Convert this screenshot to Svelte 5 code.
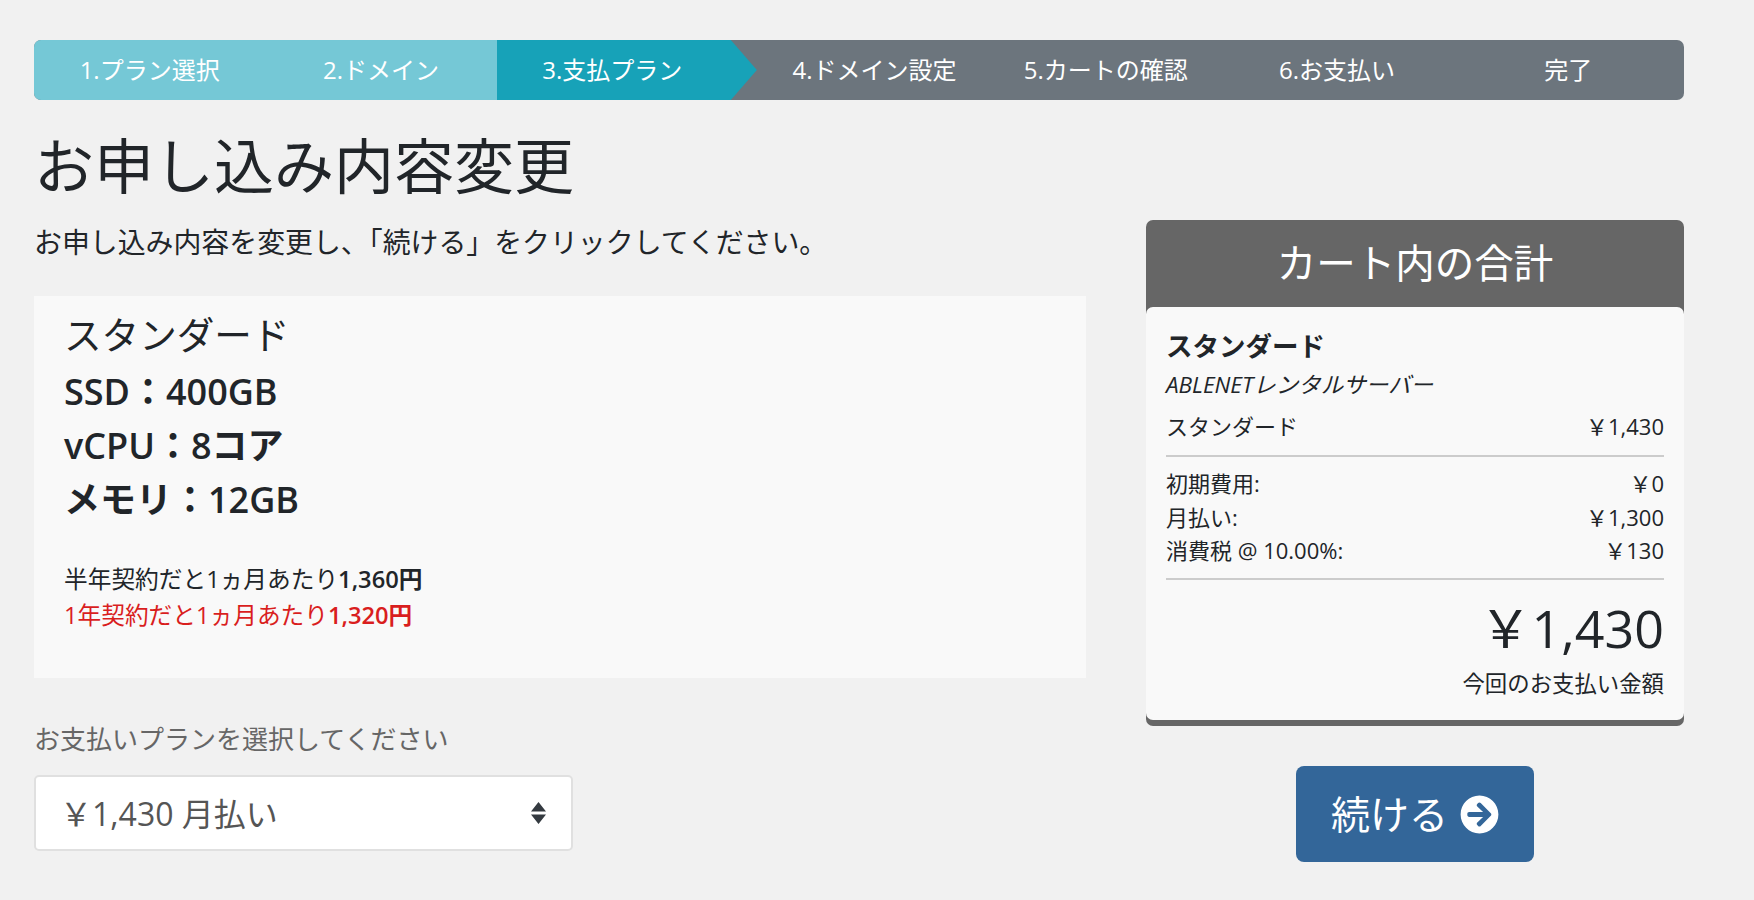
<script>
  const steps = [
    { label: '1.プラン選択', state: 'done' },
    { label: '2.ドメイン', state: 'done' },
    { label: '3.支払プラン', state: 'active' },
    { label: '4.ドメイン設定', state: 'todo' },
    { label: '5.カートの確認', state: 'todo' },
    { label: '6.お支払い', state: 'todo' },
    { label: '完了', state: 'todo' }
  ];

  const fees = [
    { name: '初期費用:', price: '￥0' },
    { name: '月払い:', price: '￥1,300' },
    { name: '消費税 @ 10.00%:', price: '￥130' }
  ];
</script>

<div class="page">
  <ol class="steps">
    {#each steps as step}
      <li class="step {step.state}">{step.label}</li>
    {/each}
  </ol>

  <div class="columns">
    <main class="left">
      <h1>お申し込み内容変更</h1>
      <p class="lead">お申し込み内容を変更し、「続ける」をクリックしてください。</p>

      <section class="plan">
        <div class="plan-name">スタンダード</div>
        <div class="spec">SSD：400GB</div>
        <div class="spec">vCPU：8コア</div>
        <div class="spec">メモリ：12GB</div>
        <p class="offer">半年契約だと1ヵ月あたり<b>1,360円</b></p>
        <p class="offer red">1年契約だと1ヵ月あたり<b>1,320円</b></p>
      </section>

      <label class="cycle">
        <span class="cycle-label">お支払いプランを選択してください</span>
        <span class="select-wrap">
          <select>
            <option>￥1,430 月払い</option>
          </select>
          <svg class="updown" viewBox="0 0 15 22" width="15" height="22">
            <path d="M7.500 0 15 9.500H0zM0 12.500h15L7.500 22z" fill="#343a40"></path>
          </svg>
        </span>
      </label>
    </main>

    <aside class="right">
      <div class="cart">
        <h2>カート内の合計</h2>
        <div class="cart-body">
          <div class="product">スタンダード</div>
          <div class="group"><em>ABLENETレンタルサーバー</em></div>
          <div class="row item"><span>スタンダード</span><span>￥1,430</span></div>
          <div class="fees">
            {#each fees as fee}
              <div class="row"><span>{fee.name}</span><span>{fee.price}</span></div>
            {/each}
          </div>
          <div class="total">￥1,430</div>
          <div class="total-label">今回のお支払い金額</div>
        </div>
      </div>

      <button class="continue">
        <span class="continue-label">続ける</span>
        <svg viewBox="0 0 512 512" width="39" height="39">
          <path fill="#fff" d="M256 8c137 0 248 111 248 248S393 504 256 504 8 393 8 256 119 8 256 8zm-28.900 143.600l75.500 72.400H120c-13.300 0-24 10.700-24 24v16c0 13.300 10.700 24 24 24h182.600l-75.500 72.400c-9.700 9.300-9.900 24.800-.4 34.300l11 10.900c9.400 9.400 24.600 9.400 33.900 0L404.300 273c9.400-9.400 9.400-24.600 0-33.900L271.600 106.300c-9.400-9.400-24.600-9.400-33.900 0l-11 10.900c-9.500 9.600-9.300 25.100.4 34.400z"></path>
        </svg>
      </button>
    </aside>
  </div>
</div>

<style>
  :global(body) {
    background: #f1f1f1;
    color: #212529;
    font-family: "Open Sans", "Noto Sans CJK JP", sans-serif;
  }

  .page {
    width: 1650px;
    margin-left: 34px;
    padding-top: 40px;
  }

  .steps {
    display: flex;
    height: 60px;
    margin: 0;
    padding: 0;
    list-style: none;
    background: #6c757d;
    border-radius: 7px;
    overflow: hidden;
    font-size: 24px;
  }

  .step {
    position: relative;
    width: 231.500px;
    padding-bottom: 3px;
    box-sizing: border-box;
    display: flex;
    align-items: center;
    justify-content: center;
    color: #fff;
  }

  .done {
    background: #75c8d6;
  }

  .active {
    width: 234.500px;
    padding-right: 3px;
    margin-right: 28px;
    background: #17a2b8;
  }

  .active::after {
    content: "";
    position: absolute;
    left: 100%;
    top: 0;
    width: 26px;
    height: 60px;
    background: #17a2b8;
    clip-path: polygon(0 0, 100% 50%, 0 100%);
  }

  .columns {
    display: grid;
    grid-template-columns: 1052px 538px;
    justify-content: space-between;
  }

  h1 {
    margin: 30px 0 0;
    font-size: 60px;
    font-weight: 400;
    line-height: 1.2;
  }

  .lead {
    margin: 22px 0 0;
    font-size: 27.900px;
    line-height: 36px;
  }

  .plan {
    margin-top: 36px;
    height: 382px;
    box-sizing: border-box;
    padding: 15px 30px;
    background: #f9f9f9;
  }

  .plan-name {
    margin-bottom: 6px;
    font-size: 37.600px;
    line-height: 48px;
  }

  .spec {
    font-size: 36px;
    font-weight: 600;
    line-height: 54px;
  }

  .offer {
    margin: 0;
    font-size: 23.700px;
    line-height: 36px;
  }

  .spec + .offer {
    margin-top: 34px;
  }

  .red {
    color: #d91e1e;
  }

  .offer b {
    font-weight: 600;
  }

  .cycle {
    display: block;
    margin-top: 43px;
  }

  .cycle-label {
    display: block;
    color: #666;
    font-size: 26px;
    line-height: 36px;
  }

  .select-wrap {
    position: relative;
    display: block;
    width: 539px;
    margin-top: 18px;
  }

  select {
    appearance: none;
    width: 100%;
    height: 76px;
    padding: 0 24px;
    background: #fff;
    border: 2px solid #e0e0e0;
    border-radius: 5px;
    color: #555;
    font: inherit;
    font-size: 32px;
  }

  .updown {
    position: absolute;
    right: 27px;
    top: 27px;
  }

  .right {
    padding-top: 120px;
  }

  .cart {
    background: #666;
    border-radius: 7px;
    padding-bottom: 6px;
  }

  h2 {
    margin: 0;
    height: 87px;
    color: #fff;
    font-size: 39.500px;
    font-weight: 400;
    line-height: 87px;
    text-align: center;
  }

  .cart-body {
    padding: 21px 20px 14px;
    height: 413px;
    box-sizing: border-box;
    background: #f9f9f9;
    border-radius: 7px;
    font-size: 22px;
  }

  .product {
    font-size: 26.500px;
    font-weight: 700;
    line-height: 36px;
  }

  .group {
    font-size: 22.500px;
    line-height: 36px;
    margin-top: 3px;
  }

  .row {
    display: flex;
    justify-content: space-between;
  }

  .item {
    margin-top: 7px;
    padding-bottom: 12px;
    line-height: 33px;
    border-bottom: 2px solid #ccc;
  }

  .fees {
    padding: 10px 0 10px;
    border-bottom: 2px solid #ccc;
    line-height: 33.500px;
  }

  .total {
    margin-top: 16px;
    font-size: 52px;
    line-height: 64px;
    text-align: right;
  }

  .total-label {
    margin-top: 6px;
    font-size: 22.400px;
    line-height: 36px;
    text-align: right;
  }

  .continue {
    display: flex;
    align-items: center;
    gap: 12px;
    height: 96px;
    margin: 40px auto 0;
    padding: 0 34.500px;
    background: #336699;
    border: 0;
    border-radius: 8px;
    color: #fff;
    font: inherit;
    font-size: 39px;
  }

  .continue-label {
    padding-bottom: 4px;
  }
</style>
